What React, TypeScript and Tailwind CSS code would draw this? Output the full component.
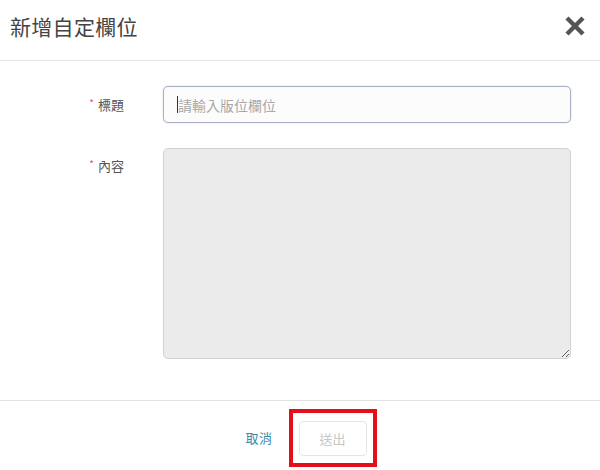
import { useState } from "react";

const font = { fontFamily: '"Noto Sans CJK TC", "Noto Sans", sans-serif' };

const FieldLabel = ({ text }: { text: string }) => (
	<div className="w-[124px] shrink-0 flex justify-end items-center gap-[4px] text-[13px] text-[#555]">
		<span className="text-[10px] text-[#e05a5a] leading-none -mt-[4px]">*</span>
		<span>{text}</span>
	</div>
);

const App = () => {
	const [title, setTitle] = useState("");

	return (
		<div className="w-[600px] h-[470px] bg-white flex flex-col overflow-hidden" style={font}>
			{/* header */}
			<div className="h-[61px] shrink-0 flex items-start justify-between pl-[10px] pr-[15px] pt-[10px] border-b border-[#e6e6e6]">
				<h1 className="text-[21px] leading-[32px] text-[#444] font-normal tracking-[0.3px]">新增自定欄位</h1>
				<button className="mt-[6px] w-[20px] h-[20px]" aria-label="close">
					<svg viewBox="0 0 20 20" width="20" height="20">
						<path d="M2 2 L18 18 M18 2 L2 18" stroke="#555" strokeWidth="4.4" strokeLinecap="butt" />
					</svg>
				</button>
			</div>

			{/* body */}
			<div className="h-[339px] shrink-0 flex flex-col gap-[25px] pt-[25px] pr-[29px]">
				<div className="flex items-center gap-[39px] h-[37px]">
					<FieldLabel text="標題" />
					<div className="relative flex-1">
						<input
							value={title}
							onChange={(e) => setTitle(e.target.value)}
							placeholder="請輸入版位欄位"
							className="w-full h-[37px] rounded-[5px] border border-[#aab0c6] bg-[#fcfcfd] pl-[14px] text-[14px] text-[#444] placeholder:text-[#a8a8a8] outline-none shadow-[0_0_2px_rgba(130,135,170,0.35)]"
						/>
						{title === "" && <span className="absolute left-[14px] top-[10px] w-[1px] h-[17px] bg-[#333]" />}
					</div>
				</div>
				<div className="flex items-start gap-[39px]">
					<div className="pt-[8px]">
						<FieldLabel text="內容" />
					</div>
					<textarea
						readOnly
						className="flex-1 h-[211px] rounded-[5px] border border-[#d2d2d2] bg-[#ebebeb] outline-none resize-y"
					/>
				</div>
			</div>

			{/* footer */}
			<div className="flex-1 border-t border-[#e3e3e3] flex justify-center items-start pt-[8px] pl-[22px] gap-[16px]">
				<button className="mt-[19px] text-[13px] text-[#3a8aa6] leading-[20px] tracking-[0.5px]">取消</button>
				<div className="border-[4px] border-[#e3101c] pt-[8px] pb-[7px] px-[6px]">
					<button
						disabled
						className="w-[68px] h-[35px] rounded-[4px] border border-[#e6e6e6] bg-white text-[13px] text-[#c6c6c6]"
					>
						送出
					</button>
				</div>
			</div>
		</div>
	);
};

export default App;
